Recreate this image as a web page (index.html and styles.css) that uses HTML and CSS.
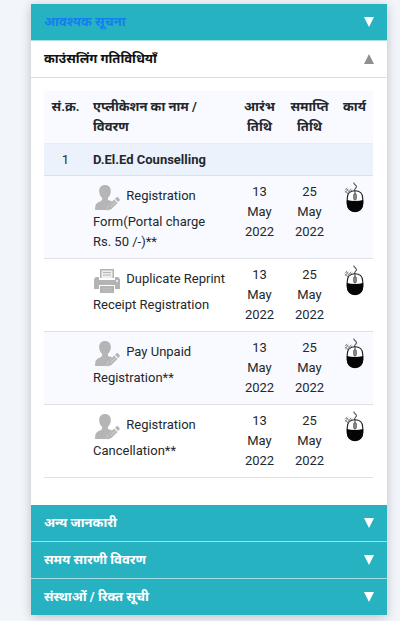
FILE: index.html
```html
<!DOCTYPE html>
<html lang="hi">
<head>
<meta charset="utf-8">
<meta name="viewport" content="width=device-width, initial-scale=1">
<title>काउंसलिंग गतिविधियाँ</title>
<link rel="stylesheet" href="styles.css">
</head>
<body>
<svg class="defs" aria-hidden="true">
  <symbol id="down" viewBox="0 0 10 10"><path fill="currentColor" d="M0 0h10L5 10z"/></symbol>
  <symbol id="up" viewBox="0 0 10 10"><path fill="currentColor" d="M0 10h10L5 0z"/></symbol>
  <symbol id="user" viewBox="0 0 26 26">
    <path fill="#b5b5b5" d="M11 0C7.300 0 5 2.600 5.200 6.400c.1 2.700 1.300 5 2.900 6.400v2C7 17 1.500 17.300 1.300 21.500L1 25h11.500l1.200-4 4.600-4.700c-1.800-.6-3.800-.6-4.400-1.500v-2c1.600-1.400 2.800-3.700 2.900-6.400C17 2.600 14.700 0 11 0z"/>
    <path fill="#b5b5b5" d="M13.800 20.800l6.400-6.200 3.300 3.400-6.400 6.200-4.400 1.200zM21 13.800l1.400-1.300c.6-.6 1.200-.5 1.800 0l1.300 1.400c.5.6.5 1.200 0 1.700l-1.300 1.400z"/>
    <path stroke="#dedede" stroke-width=".8" d="M16.500 21.800l5.300-5.100"/>
  </symbol>
  <symbol id="printer" viewBox="0 0 26 26">
    <path fill="#b3b3b3" d="M6 1h14v9H6zM3 9h2v3h16V9h2c1.700 0 3 1.300 3 3v9h-5v-4H5v4H0v-9c0-1.700 1.300-3 3-3zM6 18h14v7H6z"/>
    <path fill="#eee" d="M7.500 2.500h11V10h-11z"/>
    <path stroke="#b5b5b5" d="M9 4.500h8M9 7h8"/>
    <path fill="#e9e9e9" d="M22 12h2v2h-2z"/>
    <path stroke="#bebebe" d="M8 20.500h10M8 23h10"/>
  </symbol>
  <symbol id="mouse" viewBox="0 0 22 32">
    <path fill="none" stroke="#555" stroke-width="1.200" d="M10 .5c-1 2 3 2.500 2.500 4.500-.3 1.500-2.500 1.500-2 4.500"/>
    <path fill="#fff" stroke="#222" stroke-width="1.200" d="M11 9c4.800 0 8 3 8 8v5c0 5-3.200 8.500-8 8.500S3 27 3 22v-5c0-5 3.200-8 8-8z"/>
    <path fill="#050505" d="M2.500 18.500q8.500 2 17 0V22c0 5.300-3.500 9-8.500 9s-8.500-3.700-8.500-9z"/>
    <path stroke="#333" d="M11 9v10"/>
    <rect x="9.500" y="12" width="3" height="6.500" rx="1.500" fill="#888" stroke="#444" stroke-width=".6"/>
    <path fill="none" stroke="#777" stroke-width=".9" d="M1 11l3-4M3 12l4-5M5 11l3-3M1 8l2-2M2 7l4 4M.5 9L4 12.500"/>
  </symbol>
</svg>
<main class="accordion">
  <button class="bar bar-first" type="button"><span>आवश्यक सूचना</span><svg class="arrow"><use href="#down"/></svg></button>
  <button class="bar bar-open" type="button" aria-expanded="true"><span>काउंसलिंग गतिविधियाँ</span><svg class="arrow"><use href="#up"/></svg></button>
  <section class="content">
    <table>
      <colgroup><col class="c-num"><col><col class="c-start"><col class="c-end"><col class="c-act"></colgroup>
      <thead>
        <tr><th>सं.क्र.</th><th class="name">एप्लीकेशन का नाम / विवरण</th><th>आरंभ तिथि</th><th>समाप्ति तिथि</th><th>कार्य</th></tr>
      </thead>
      <tbody>
        <tr class="group"><td>1</td><th class="name" colspan="4">D.El.Ed Counselling</th></tr>
        <tr class="tint"><td></td><td class="name"><svg class="icon"><use href="#user"/></svg> Registration Form(Portal charge Rs. 50 /-)**</td><td class="date">13 May 2022</td><td class="date">25 May 2022</td><td><a href="#register" aria-label="Registration Form"><svg class="mouse"><use href="#mouse"/></svg></a></td></tr>
        <tr><td></td><td class="name"><svg class="icon"><use href="#printer"/></svg> Duplicate Reprint Receipt Registration</td><td class="date">13 May 2022</td><td class="date">25 May 2022</td><td><a href="#reprint" aria-label="Duplicate Reprint"><svg class="mouse"><use href="#mouse"/></svg></a></td></tr>
        <tr class="tint"><td></td><td class="name"><svg class="icon"><use href="#user"/></svg> Pay Unpaid Registration**</td><td class="date">13 May 2022</td><td class="date">25 May 2022</td><td><a href="#pay" aria-label="Pay Unpaid Registration"><svg class="mouse"><use href="#mouse"/></svg></a></td></tr>
        <tr><td></td><td class="name"><svg class="icon"><use href="#user"/></svg> Registration Cancellation**</td><td class="date">13 May 2022</td><td class="date">25 May 2022</td><td><a href="#cancel" aria-label="Registration Cancellation"><svg class="mouse"><use href="#mouse"/></svg></a></td></tr>
      </tbody>
    </table>
  </section>
  <button class="bar" type="button"><span>अन्य जानकारी</span><svg class="arrow"><use href="#down"/></svg></button>
  <button class="bar" type="button"><span>समय सारणी विवरण</span><svg class="arrow"><use href="#down"/></svg></button>
  <button class="bar" type="button"><span>संस्थाओं / रिक्त सूची</span><svg class="arrow"><use href="#down"/></svg></button>
</main>
</body>
</html>
```
FILE: styles.css
```css
* { box-sizing: border-box; }
body {
  margin: 0;
  padding: 4px 13px 6px 31px;
  background: #f2f6fa;
  color: #24282c;
  font: 13px/20px Roboto, "Noto Sans", "Noto Sans Devanagari", sans-serif;
}
.defs { display: none; }
.accordion {
  background: #fff;
  box-shadow: 0 2px 10px rgba(0, 0, 0, .22);
}
.bar {
  display: flex;
  align-items: center;
  justify-content: space-between;
  width: 100%;
  height: 37px;
  padding: 0 13px;
  border: 0;
  border-bottom: 1px solid #a5dfe4;
  background: #27b2c2;
  color: #fff;
  font: inherit;
  font-weight: 700;
  text-align: left;
}
.bar:last-child { height: 36px; border-bottom: 0; }
.bar-first { color: #147ef0; }
.bar-first .arrow { color: #fff; }
.bar-open {
  background: #fff;
  border-bottom-color: #dcdfe2;
  color: #111;
}
.bar-open .arrow { color: #909090; }
.arrow { width: 10px; height: 10px; }
.content { padding: 13px 14px 27px 13px; }
table {
  width: 100%;
  table-layout: fixed;
  border-collapse: separate;
  border-spacing: 0;
}
.c-num { width: 43px; }
.c-start { width: 47px; }
.c-end { width: 53px; }
.c-act { width: 37px; }
th, td {
  padding: 6px 4px;
  border-bottom: 1px solid #dee2e6;
  vertical-align: top;
  text-align: center;
}
.name { padding-left: 6px; padding-right: 6px; text-align: left; }
.date { padding-left: 8px; padding-right: 8px; }
thead th, .tint td { background: #f8faff; }
thead th { border-bottom-color: #e8edf4; }
.group th, .group td { padding-bottom: 5px; background: #ecf2fb; }
.tint .name { padding-right: 12px; }
.icon {
  width: 26px;
  height: 26px;
  margin: 3px 3px 1px 1px;
  vertical-align: middle;
}
.mouse { display: block; width: 22px; height: 31px; margin: 0 auto; }
```
